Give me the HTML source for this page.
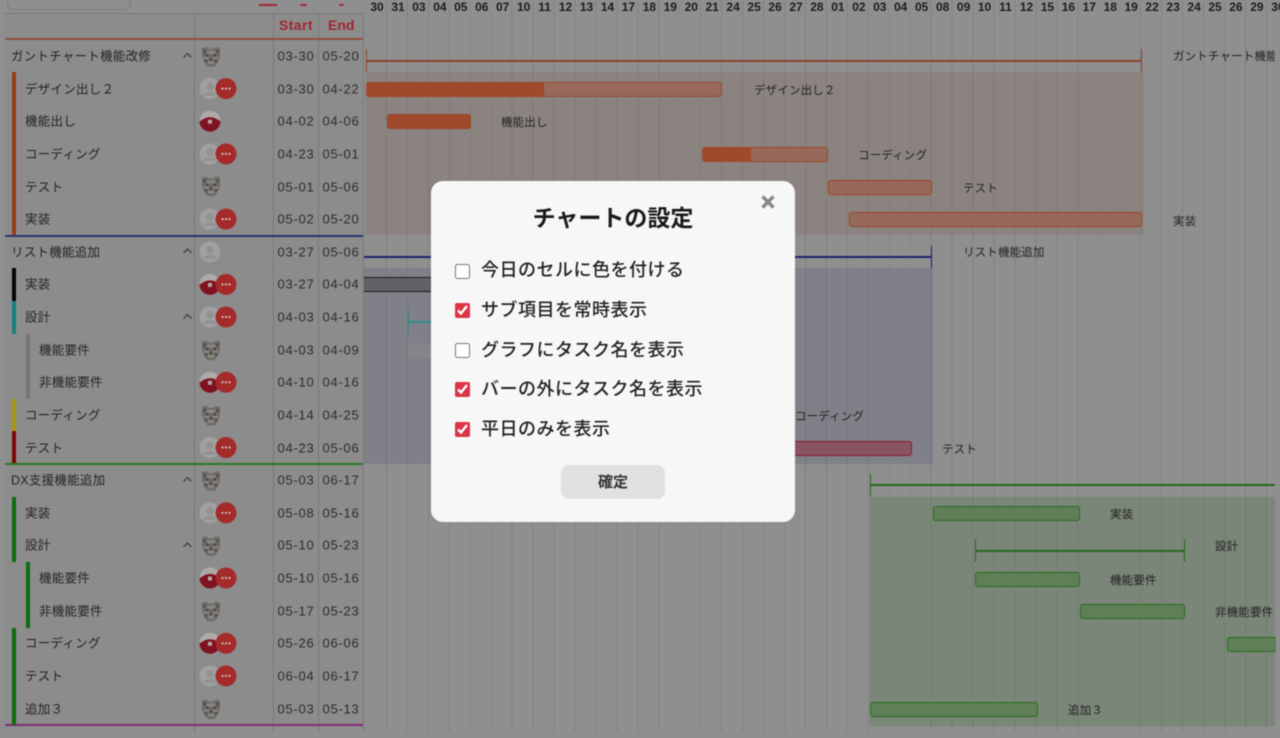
<!DOCTYPE html>
<html lang="ja"><head><meta charset="utf-8"><title>チャートの設定</title>
<style>
html,body{margin:0;padding:0;width:1280px;height:738px;overflow:hidden;background:#8f8f8f;font-family:"Liberation Sans","Noto Sans CJK JP",sans-serif}
#root{position:absolute;left:0;top:0;width:1280px;height:738px;overflow:hidden;background:#8f8f8f;filter:blur(.4px)}
#grid{position:absolute;left:366px;top:0;width:909px;height:732px;background-image:repeating-linear-gradient(90deg,transparent 0,transparent 20px,#828282 20px,#828282 20.95px)}
.a{position:absolute}
.t{position:absolute;font-size:12.5px;letter-spacing:.25px;line-height:16px;color:#242424;white-space:nowrap;transform:translateY(.5px)}
.d{position:absolute;font-size:13px;letter-spacing:.75px;line-height:16px;color:#2c2c2c;width:46px;text-align:center;white-space:nowrap;transform:translateY(.5px)}
.h{position:absolute;top:0;font-size:12px;font-weight:700;line-height:14px;color:#1c1c1c;width:21px;text-align:center}
.lab{position:absolute;font-size:11.5px;letter-spacing:.15px;line-height:16px;color:#222;white-space:nowrap;transform:translateY(1px)}
.o{position:absolute;height:13px;border:1px solid #9a452a;border-radius:3px;background:#96695a}
.g{position:absolute;height:13px;border:1px solid #286c1e;border-radius:3px;background:#5f7f58}
#modal{position:absolute;left:431px;top:181px;width:364px;height:341px;background:#f7f7f8;border-radius:12px}
#modal h1{position:absolute;left:0;top:20px;width:364px;margin:0;text-align:center;font-size:23px;font-weight:700;line-height:34px;color:#1a1a1a}
.c{position:absolute;left:23.500px;width:15px;height:15px;margin:0;accent-color:#dc3545}
.l{position:absolute;left:50px;font-size:18px;letter-spacing:.5px;line-height:26px;color:#222;font-weight:500;white-space:nowrap}
#b{position:absolute;left:130px;top:284px;width:104px;height:34px;background:#e1e1e4;border-radius:8px;text-align:center;font-size:15px;font-weight:700;line-height:36px;color:#333}
</style></head><body><div id="root">
<div id="grid"></div>

<!-- left panel -->
<div class="a" style="left:5px;top:13px;width:358px;height:712px;background:#8c8c8c"></div>
<div class="a" style="left:7px;top:0;width:122px;height:9px;border:1px solid #7a7a7a;border-top:0;border-radius:0 0 6px 6px"></div>
<div class="a" style="left:5px;top:13px;width:358px;height:1px;background:#777"></div>
<div class="a" style="left:194px;top:13px;width:1px;height:720px;background:#777"></div>
<div class="a" style="left:273px;top:13px;width:1px;height:720px;background:#777"></div>
<div class="a" style="left:318px;top:13px;width:1px;height:720px;background:#777"></div>
<div class="a" style="left:363px;top:13px;width:1px;height:720px;background:#7b7b7b"></div>
<div class="a" style="left:259px;top:4px;width:18px;height:2px;background:#a22533"></div>
<div class="a" style="left:300px;top:4px;width:7px;height:2px;background:#a22533;border-radius:0 0 3px 3px"></div>
<div class="a" style="left:339px;top:4px;width:5px;height:2px;background:#a22533;border-radius:0 0 3px 3px"></div>
<div class="a" style="left:279px;top:17px;font-size:14px;letter-spacing:.4px;font-weight:700;line-height:17px;color:#a22533">Start</div>
<div class="a" style="left:328px;top:17px;font-size:14px;font-weight:700;line-height:17px;color:#a22533">End</div>

<div class="a" style="left:5px;top:38px;width:358px;height:2px;background:#97503c"></div>
<div class="a" style="left:5px;top:234.500px;width:358px;height:2px;background:#2b3370"></div>
<div class="a" style="left:5px;top:462.500px;width:358px;height:2px;background:#2a7a22"></div>
<div class="a" style="left:5px;top:724px;width:358px;height:2px;background:#7f2c78"></div>

<div class="a" style="left:12px;top:72px;width:4px;height:163px;background:#963a18"></div>
<div class="a" style="left:12px;top:268px;width:4px;height:33px;background:#050505"></div>
<div class="a" style="left:12px;top:301px;width:4px;height:32.500px;background:#1b7f80"></div>
<div class="a" style="left:26px;top:333.500px;width:4px;height:65px;background:#74747c"></div>
<div class="a" style="left:12px;top:398.500px;width:4px;height:32.500px;background:#a89510"></div>
<div class="a" style="left:12px;top:431px;width:4px;height:32px;background:#7d0808"></div>
<div class="a" style="left:12px;top:496.500px;width:4px;height:65px;background:#0e6b0e"></div>
<div class="a" style="left:26px;top:562px;width:4px;height:65.500px;background:#0e6b0e"></div>
<div class="a" style="left:12px;top:627.500px;width:4px;height:97px;background:#0e6b0e"></div>

<div class="t" style="left:11px;top:48px">ガントチャート機能改修</div>
<div class="t" style="left:25px;top:80.600px">デザイン出し２</div>
<div class="t" style="left:25px;top:113.200px">機能出し</div>
<div class="t" style="left:25px;top:145.900px">コーディング</div>
<div class="t" style="left:25px;top:178.500px">テスト</div>
<div class="t" style="left:25px;top:211.100px">実装</div>
<div class="t" style="left:11px;top:243.800px">リスト機能追加</div>
<div class="t" style="left:25px;top:276.400px">実装</div>
<div class="t" style="left:25px;top:309px">設計</div>
<div class="t" style="left:39px;top:341.600px">機能要件</div>
<div class="t" style="left:39px;top:374.300px">非機能要件</div>
<div class="t" style="left:25px;top:406.900px">コーディング</div>
<div class="t" style="left:25px;top:439.500px">テスト</div>
<div class="t" style="left:11px;top:472.100px">DX支援機能追加</div>
<div class="t" style="left:25px;top:504.800px">実装</div>
<div class="t" style="left:25px;top:537.400px">設計</div>
<div class="t" style="left:39px;top:570px">機能要件</div>
<div class="t" style="left:39px;top:602.600px">非機能要件</div>
<div class="t" style="left:25px;top:635.300px">コーディング</div>
<div class="t" style="left:25px;top:667.900px">テスト</div>
<div class="t" style="left:25px;top:700.500px">追加３</div>

<div class="d" style="left:273px;top:48px">03-30</div><div class="d" style="left:318px;top:48px">05-20</div>
<div class="d" style="left:273px;top:80.600px">03-30</div><div class="d" style="left:318px;top:80.600px">04-22</div>
<div class="d" style="left:273px;top:113.200px">04-02</div><div class="d" style="left:318px;top:113.200px">04-06</div>
<div class="d" style="left:273px;top:145.900px">04-23</div><div class="d" style="left:318px;top:145.900px">05-01</div>
<div class="d" style="left:273px;top:178.500px">05-01</div><div class="d" style="left:318px;top:178.500px">05-06</div>
<div class="d" style="left:273px;top:211.100px">05-02</div><div class="d" style="left:318px;top:211.100px">05-20</div>
<div class="d" style="left:273px;top:243.800px">03-27</div><div class="d" style="left:318px;top:243.800px">05-06</div>
<div class="d" style="left:273px;top:276.400px">03-27</div><div class="d" style="left:318px;top:276.400px">04-04</div>
<div class="d" style="left:273px;top:309px">04-03</div><div class="d" style="left:318px;top:309px">04-16</div>
<div class="d" style="left:273px;top:341.600px">04-03</div><div class="d" style="left:318px;top:341.600px">04-09</div>
<div class="d" style="left:273px;top:374.300px">04-10</div><div class="d" style="left:318px;top:374.300px">04-16</div>
<div class="d" style="left:273px;top:406.900px">04-14</div><div class="d" style="left:318px;top:406.900px">04-25</div>
<div class="d" style="left:273px;top:439.500px">04-23</div><div class="d" style="left:318px;top:439.500px">05-06</div>
<div class="d" style="left:273px;top:472.100px">05-03</div><div class="d" style="left:318px;top:472.100px">06-17</div>
<div class="d" style="left:273px;top:504.800px">05-08</div><div class="d" style="left:318px;top:504.800px">05-16</div>
<div class="d" style="left:273px;top:537.400px">05-10</div><div class="d" style="left:318px;top:537.400px">05-23</div>
<div class="d" style="left:273px;top:570px">05-10</div><div class="d" style="left:318px;top:570px">05-16</div>
<div class="d" style="left:273px;top:602.600px">05-17</div><div class="d" style="left:318px;top:602.600px">05-23</div>
<div class="d" style="left:273px;top:635.300px">05-26</div><div class="d" style="left:318px;top:635.300px">06-06</div>
<div class="d" style="left:273px;top:667.900px">06-04</div><div class="d" style="left:318px;top:667.900px">06-17</div>
<div class="d" style="left:273px;top:700.500px">05-03</div><div class="d" style="left:318px;top:700.500px">05-13</div>

<!-- header dates -->
<div class="h" style="left:366.500px">30</div><div class="h" style="left:387.500px">31</div><div class="h" style="left:408.400px">03</div><div class="h" style="left:429.400px">04</div><div class="h" style="left:450.300px">05</div><div class="h" style="left:471.300px">06</div><div class="h" style="left:492.200px">07</div><div class="h" style="left:513.200px">10</div><div class="h" style="left:534.100px">11</div><div class="h" style="left:555px">12</div><div class="h" style="left:576px">13</div><div class="h" style="left:597px">14</div><div class="h" style="left:617.900px">17</div><div class="h" style="left:638.900px">18</div><div class="h" style="left:659.800px">19</div><div class="h" style="left:680.800px">20</div><div class="h" style="left:701.700px">21</div><div class="h" style="left:722.600px">24</div><div class="h" style="left:743.600px">25</div><div class="h" style="left:764.600px">26</div><div class="h" style="left:785.500px">27</div><div class="h" style="left:806.400px">28</div><div class="h" style="left:827.400px">01</div><div class="h" style="left:848.400px">02</div><div class="h" style="left:869.300px">03</div><div class="h" style="left:890.200px">04</div><div class="h" style="left:911.200px">05</div><div class="h" style="left:932.200px">08</div><div class="h" style="left:953.100px">09</div><div class="h" style="left:974px">10</div><div class="h" style="left:995px">11</div><div class="h" style="left:1016px">12</div><div class="h" style="left:1036.900px">15</div><div class="h" style="left:1057.900px">16</div><div class="h" style="left:1078.800px">17</div><div class="h" style="left:1099.800px">18</div><div class="h" style="left:1120.700px">19</div><div class="h" style="left:1141.600px">22</div><div class="h" style="left:1162.600px">23</div><div class="h" style="left:1183.600px">24</div><div class="h" style="left:1204.500px">25</div><div class="h" style="left:1225.400px">26</div><div class="h" style="left:1246.400px">29</div><div class="h" style="left:1267.400px">30</div>

<!-- gantt: group 1 -->
<div class="a" style="left:366px;top:72px;width:778px;height:163px;background:rgba(120,70,50,.16)"></div>
<div class="a" style="left:366px;top:60px;width:776px;height:2px;background:#93402a"></div>
<div class="a" style="left:366px;top:49px;width:1px;height:23px;background:#93402a"></div>
<div class="a" style="left:1141px;top:49px;width:1px;height:23px;background:#93402a"></div>
<div class="o" style="left:366px;top:81.500px;width:354px"></div>
<div class="a" style="left:366px;top:81.500px;width:178px;height:15px;background:#9f4a2b;border-radius:3px 0 0 3px"></div>
<div class="o" style="left:387px;top:114px;width:82px;background:#9f4a2b"></div>
<div class="o" style="left:702px;top:147px;width:124px"></div>
<div class="a" style="left:702px;top:147px;width:49px;height:15px;background:#9f4a2b;border-radius:3px 0 0 3px"></div>
<div class="o" style="left:828px;top:179.500px;width:102px"></div>
<div class="o" style="left:849px;top:212px;width:291px"></div>

<!-- gantt: group 2 -->
<div class="a" style="left:364px;top:268px;width:569px;height:196px;background:rgba(60,60,110,.17)"></div>
<div class="a" style="left:364px;top:256px;width:568px;height:2px;background:#20246a"></div>
<div class="a" style="left:931px;top:246px;width:1px;height:22px;background:#20246a"></div>
<div class="a" style="left:364px;top:277px;width:80px;height:13px;border:1px solid #1a1a1a;border-width:1.500px 0;background:#626266"></div>
<div class="a" style="left:408px;top:310px;width:1px;height:24px;background:#2a8c8c"></div>
<div class="a" style="left:408px;top:321px;width:40px;height:2px;background:#2a8c8c"></div>
<div class="a" style="left:408px;top:343px;width:40px;height:15px;background:#84848b"></div>
<div class="o" style="left:780px;top:441px;width:130px;background:#885464;border-color:#861a2d"></div>

<!-- gantt: group 3 -->
<div class="a" style="left:870px;top:497px;width:405px;height:229px;background:rgba(40,100,30,.2)"></div>
<div class="a" style="left:870px;top:484px;width:405px;height:2px;background:#246a1a"></div>
<div class="a" style="left:870px;top:474px;width:1px;height:23px;background:#246a1a"></div>
<div class="g" style="left:933px;top:506px;width:145px"></div>
<div class="a" style="left:975px;top:549.500px;width:209px;height:2px;background:#246a1a"></div>
<div class="a" style="left:975px;top:539px;width:1px;height:23px;background:#246a1a"></div>
<div class="a" style="left:1184px;top:539px;width:1px;height:23px;background:#246a1a"></div>
<div class="g" style="left:975px;top:571.500px;width:103px"></div>
<div class="g" style="left:1080px;top:604px;width:103px"></div>
<div class="g" style="left:1227px;top:637px;width:48px;border-right:0;border-radius:3px 0 0 3px"></div>
<div class="g" style="left:870px;top:702px;width:166px"></div>

<div class="lab" style="left:754px;top:81.500px">デザイン出し２</div>
<div class="lab" style="left:501px;top:114px">機能出し</div>
<div class="lab" style="left:858px;top:147px">コーディング</div>
<div class="lab" style="left:963px;top:180px">テスト</div>
<div class="lab" style="left:1173px;top:212.500px">実装</div>
<div class="a" style="left:1173px;top:48px;width:102px;height:18px;overflow:hidden"><div class="lab" style="left:0;top:0">ガントチャート機能改修</div></div>
<div class="lab" style="left:963px;top:244px">リスト機能追加</div>
<div class="lab" style="left:795px;top:407.500px">コーディング</div>
<div class="lab" style="left:942px;top:441px">テスト</div>
<div class="lab" style="left:1110px;top:506px">実装</div>
<div class="lab" style="left:1215px;top:538px">設計</div>
<div class="lab" style="left:1110px;top:571.500px">機能要件</div>
<div class="lab" style="left:1215px;top:604px">非機能要件</div>
<div class="lab" style="left:1068px;top:702px">追加３</div>

<!-- avatars and chevrons -->
<svg class="a" style="left:0;top:0" width="1280" height="738" viewBox="0 0 1280 738">
<defs>
<g id="cat"><path d="M202 -9 L206 -10 L209 -8 H213 L216 -10 L220 -9 L220 -1 L218 5 L214.500 9.500 H207.500 L204 5 L202 -1Z" fill="#6e6b66"/><path d="M207 -6h8v3h-8zM204 0h5v2h-5zM213 0h5v2h-5zM208 4h6v3h-6z" fill="#8a8680"/><path d="M206 -3h2.500v2.500h-2.500zM213.500 -3h2.500v2.500h-2.500zM210 1h2v3h-2zM203.500 -7h2v3h-2zM216.500 -7h2v3h-2zM205 3h2v2h-2zM215 3h2v2h-2z" fill="#4c4945"/></g>
<g id="gray"><circle cx="210" cy="0" r="10.500" fill="#a0a0a0"/><circle cx="210" cy="-2" r="3.800" fill="#929292"/><path d="M203 7c1-5 13-5 14 0" fill="#929292"/></g>
<g id="red"><circle cx="210" cy="0" r="10.500" fill="#aeaaaa"/><path d="M199.500 0c3 -1 5-4 10.500-4s8 3 10.500 4a10.500 10.500 0 0 1-21 0Z" fill="#7f1220"/><rect x="208" y="-1.500" width="4" height="4" fill="#b5a5a5"/></g>
<g id="more"><circle cx="226" cy="0" r="10.500" fill="#a52a2a"/><circle cx="222.500" cy="0" r="1.100" fill="#cfc5c5"/><circle cx="226" cy="0" r="1.100" fill="#cfc5c5"/><circle cx="229.500" cy="0" r="1.100" fill="#cfc5c5"/></g>
<path id="chev" d="M183.500 2 L187.500 -2 L191.500 2" fill="none" stroke="#333" stroke-width="1.100"/>
</defs>
<use href="#cat" y="57"/>
<use href="#gray" y="88.600"/><use href="#more" y="88.600"/>
<use href="#red" y="121.200"/>
<use href="#gray" y="153.900"/><use href="#more" y="153.900"/>
<use href="#cat" y="186.500"/>
<use href="#gray" y="219.100"/><use href="#more" y="219.100"/>
<use href="#gray" y="251.800"/>
<use href="#red" y="284.400"/><use href="#more" y="284.400"/>
<use href="#gray" y="317"/><use href="#more" y="317"/>
<use href="#cat" y="350.600"/>
<use href="#red" y="382.300"/><use href="#more" y="382.300"/>
<use href="#cat" y="415.900"/>
<use href="#gray" y="447.500"/><use href="#more" y="447.500"/>
<use href="#cat" y="481.100"/>
<use href="#gray" y="512.800"/><use href="#more" y="512.800"/>
<use href="#cat" y="546.400"/>
<use href="#red" y="578"/><use href="#more" y="578"/>
<use href="#cat" y="611.600"/>
<use href="#red" y="643.300"/><use href="#more" y="643.300"/>
<use href="#gray" y="675.900"/><use href="#more" y="675.900"/>
<use href="#cat" y="709.500"/>
<use href="#chev" y="55.500"/><use href="#chev" y="251"/><use href="#chev" y="316.500"/><use href="#chev" y="479.500"/><use href="#chev" y="545"/>
</svg>

<!-- modal -->
<div id="modal">
<h1>チャートの設定</h1>
<svg class="a" style="left:329px;top:13px" width="16" height="16" viewBox="0 0 16 16"><path d="M2.500 2.500 L13.500 13.500 M13.500 2.500 L2.500 13.500" stroke="#888" stroke-width="3.400" fill="none"/></svg>
<input class="c" type="checkbox" style="top:82.500px"><div class="l" style="top:76px">今日のセルに色を付ける</div>
<input class="c" type="checkbox" checked style="top:122px"><div class="l" style="top:115.500px">サブ項目を常時表示</div>
<input class="c" type="checkbox" style="top:162px"><div class="l" style="top:155.500px">グラフにタスク名を表示</div>
<input class="c" type="checkbox" checked style="top:201px"><div class="l" style="top:195px">バーの外にタスク名を表示</div>
<input class="c" type="checkbox" checked style="top:241px"><div class="l" style="top:234.500px">平日のみを表示</div>
<div id="b">確定</div>
</div>
</div></body></html>
